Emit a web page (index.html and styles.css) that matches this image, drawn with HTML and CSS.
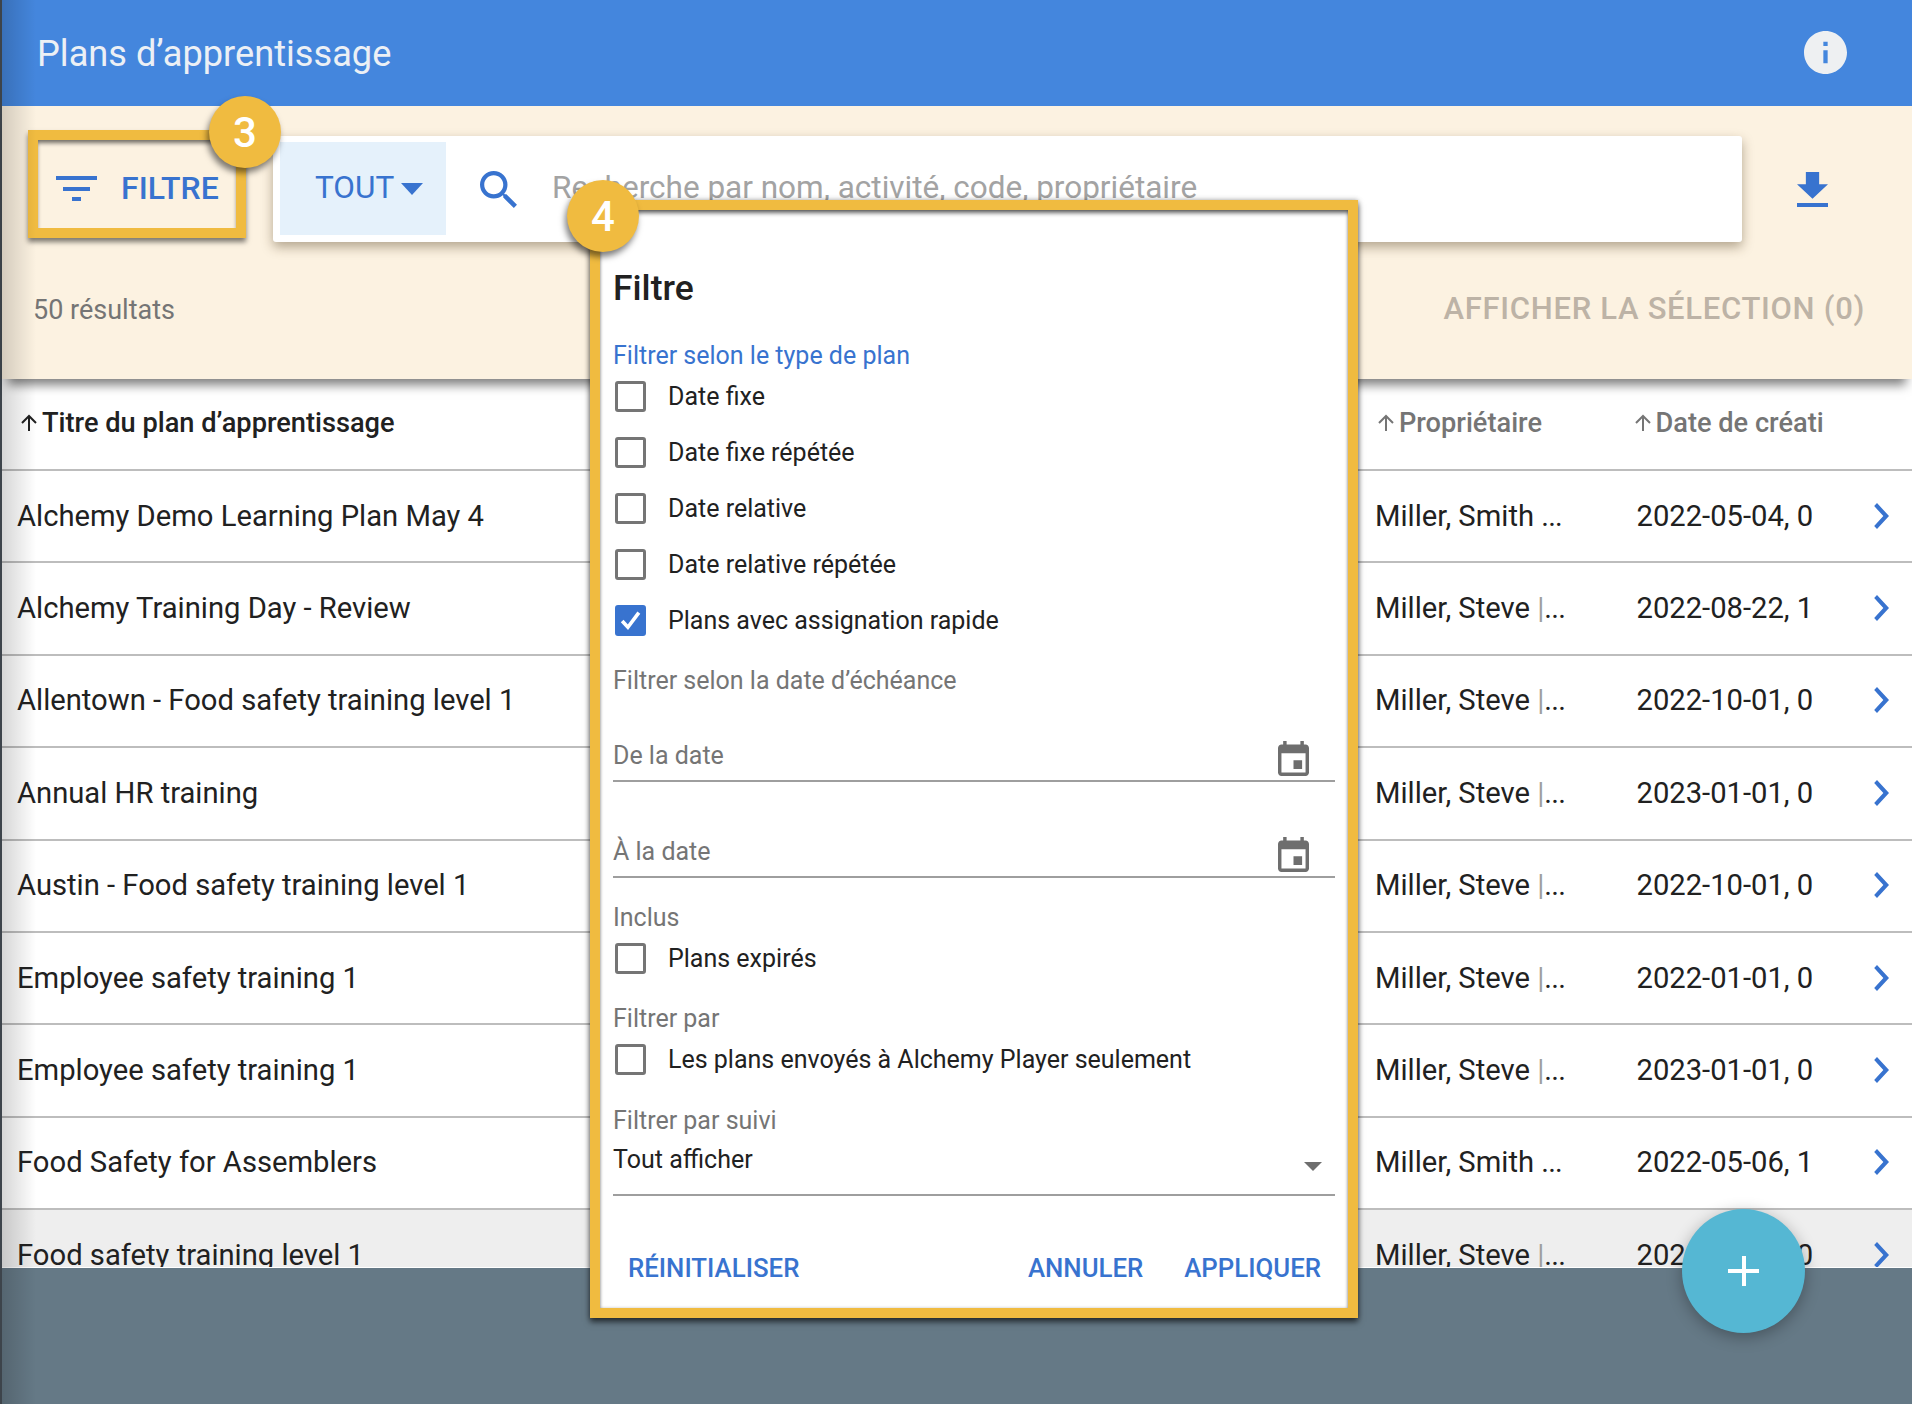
FILE: index.html
```html
<!doctype html>
<html lang="fr">
<head>
  <meta charset="UTF-8">
  <title>Plans d'apprentissage</title>
  <link rel="stylesheet" href="styles.css">
</head>
<body>
  <div class="app">
    <header class="topbar">
      <h1 class="topbar-title">Plans d’apprentissage</h1>
      <svg class="info-icon" viewBox="2 2 20 20"><path d="M12 2C6.48 2 2 6.48 2 12s4.48 10 10 10 10-4.48 10-10S17.52 2 12 2zm1 15h-2v-6h2v6zm0-8h-2V7h2v2z"/></svg>
    </header>

    <section class="toolbar">
      <div class="toolbar-top">
        <div class="filter-btn">
          <span class="filter-icon"><i></i><i></i><i></i></span>
          <span>FILTRE</span>
        </div>
        <div class="search">
          <div class="scope">TOUT<span class="scope-caret"></span></div>
          <svg class="search-icon" viewBox="3 3 17.5 17.5"><path d="M15.5 14h-.79l-.28-.27A6.471 6.471 0 0 0 16 9.5 6.5 6.5 0 1 0 9.5 16c1.61 0 3.09-.59 4.23-1.57l.27.28v.79l5 4.99L20.49 19l-4.99-5zm-6 0C7.01 14 5 11.99 5 9.5S7.01 5 9.5 5 14 7.01 14 9.5 11.99 14 9.5 14z"/></svg>
          <span class="placeholder">Recherche par nom, activité, code, propriétaire</span>
        </div>
        <svg class="download-icon" viewBox="5 3 14 17" preserveAspectRatio="none"><path d="M19 9h-4V3H9v6H5l7 7 7-7zM5 18v2h14v-2H5z"/></svg>
      </div>
      <div class="toolbar-bottom">
        <span class="count">50 résultats</span>
        <span class="show-selection">AFFICHER LA SÉLECTION (0)</span>
      </div>
    </section>

    <div class="list">
      <div class="row row-head">
        <div class="cell-title"><svg class="sort-icon" viewBox="0 0 18 18"><path d="M9 17V2M2 9l7-7 7 7"/></svg>Titre du plan d’apprentissage</div>
        <div class="cell-muted"><svg class="sort-icon" viewBox="0 0 18 18"><path d="M9 17V2M2 9l7-7 7 7"/></svg>Propriétaire</div>
        <div class="cell-muted cell-date"><svg class="sort-icon" viewBox="0 0 18 18"><path d="M9 17V2M2 9l7-7 7 7"/></svg>Date de création</div>
      </div>

      <div class="row">
        <div>Alchemy Demo Learning Plan May 4</div>
        <div>Miller, Smith <span class="dots">...</span></div>
        <div class="cell-date">2022-05-04, 0</div>
        <svg class="chevron" viewBox="8 5.5 8.5 13" preserveAspectRatio="none"><path d="M10 6L8.59 7.41 13.17 12l-4.58 4.59L10 18l6-6z"/></svg>
      </div>
      <div class="row">
        <div>Alchemy Training Day - Review</div>
        <div>Miller, Steve <span class="pipe">|</span><span class="dots">...</span></div>
        <div class="cell-date">2022-08-22, 1</div>
        <svg class="chevron" viewBox="8 5.5 8.5 13" preserveAspectRatio="none"><path d="M10 6L8.59 7.41 13.17 12l-4.58 4.59L10 18l6-6z"/></svg>
      </div>
      <div class="row">
        <div>Allentown - Food safety training level 1</div>
        <div>Miller, Steve <span class="pipe">|</span><span class="dots">...</span></div>
        <div class="cell-date">2022-10-01, 0</div>
        <svg class="chevron" viewBox="8 5.5 8.5 13" preserveAspectRatio="none"><path d="M10 6L8.59 7.41 13.17 12l-4.58 4.59L10 18l6-6z"/></svg>
      </div>
      <div class="row">
        <div>Annual HR training</div>
        <div>Miller, Steve <span class="pipe">|</span><span class="dots">...</span></div>
        <div class="cell-date">2023-01-01, 0</div>
        <svg class="chevron" viewBox="8 5.5 8.5 13" preserveAspectRatio="none"><path d="M10 6L8.59 7.41 13.17 12l-4.58 4.59L10 18l6-6z"/></svg>
      </div>
      <div class="row">
        <div>Austin - Food safety training level 1</div>
        <div>Miller, Steve <span class="pipe">|</span><span class="dots">...</span></div>
        <div class="cell-date">2022-10-01, 0</div>
        <svg class="chevron" viewBox="8 5.5 8.5 13" preserveAspectRatio="none"><path d="M10 6L8.59 7.41 13.17 12l-4.58 4.59L10 18l6-6z"/></svg>
      </div>
      <div class="row">
        <div>Employee safety training 1</div>
        <div>Miller, Steve <span class="pipe">|</span><span class="dots">...</span></div>
        <div class="cell-date">2022-01-01, 0</div>
        <svg class="chevron" viewBox="8 5.5 8.5 13" preserveAspectRatio="none"><path d="M10 6L8.59 7.41 13.17 12l-4.58 4.59L10 18l6-6z"/></svg>
      </div>
      <div class="row">
        <div>Employee safety training 1</div>
        <div>Miller, Steve <span class="pipe">|</span><span class="dots">...</span></div>
        <div class="cell-date">2023-01-01, 0</div>
        <svg class="chevron" viewBox="8 5.5 8.5 13" preserveAspectRatio="none"><path d="M10 6L8.59 7.41 13.17 12l-4.58 4.59L10 18l6-6z"/></svg>
      </div>
      <div class="row">
        <div>Food Safety for Assemblers</div>
        <div>Miller, Smith <span class="dots">...</span></div>
        <div class="cell-date">2022-05-06, 1</div>
        <svg class="chevron" viewBox="8 5.5 8.5 13" preserveAspectRatio="none"><path d="M10 6L8.59 7.41 13.17 12l-4.58 4.59L10 18l6-6z"/></svg>
      </div>
      <div class="row row-hover">
        <div>Food safety training level 1</div>
        <div>Miller, Steve <span class="pipe">|</span><span class="dots">...</span></div>
        <div class="cell-date">2022-10-01, 0</div>
        <svg class="chevron" viewBox="8 5.5 8.5 13" preserveAspectRatio="none"><path d="M10 6L8.59 7.41 13.17 12l-4.58 4.59L10 18l6-6z"/></svg>
      </div>
    </div>

    <div class="backdrop"></div>

    <div class="dialog">
      <h2 class="dialog-title">Filtre</h2>

      <div class="section-link">Filtrer selon le type de plan</div>
      <div class="check-row"><span class="checkbox"></span>Date fixe</div>
      <div class="check-row"><span class="checkbox"></span>Date fixe répétée</div>
      <div class="check-row"><span class="checkbox"></span>Date relative</div>
      <div class="check-row"><span class="checkbox"></span>Date relative répétée</div>
      <div class="check-row">
        <span class="checkbox checked"><svg viewBox="0 0 24 24"><path d="M4 12.5l5.5 6L20 4.5"/></svg></span>Plans avec assignation rapide
      </div>

      <div class="label label-due">Filtrer selon la date d’échéance</div>
      <div class="field field-from">
        <span>De la date</span>
        <svg class="calendar-icon" viewBox="3 1 18 20" preserveAspectRatio="none"><path d="M17 12h-5v5h5v-5zM16 1v2H8V1H6v2H5c-1.11 0-1.99.9-1.99 2L3 19c0 1.1.89 2 2 2h14c1.1 0 2-.9 2-2V5c0-1.1-.9-2-2-2h-1V1h-2zm3 18H5V8h14v11z"/></svg>
      </div>
      <div class="field field-to">
        <span>À la date</span>
        <svg class="calendar-icon" viewBox="3 1 18 20" preserveAspectRatio="none"><path d="M17 12h-5v5h5v-5zM16 1v2H8V1H6v2H5c-1.11 0-1.99.9-1.99 2L3 19c0 1.1.89 2 2 2h14c1.1 0 2-.9 2-2V5c0-1.1-.9-2-2-2h-1V1h-2zm3 18H5V8h14v11z"/></svg>
      </div>

      <div class="label label-included">Inclus</div>
      <div class="check-row check-row-short"><span class="checkbox"></span>Plans expirés</div>

      <div class="label label-by">Filtrer par</div>
      <div class="check-row check-row-short check-row-player"><span class="checkbox"></span>Les plans envoyés à Alchemy Player seulement</div>

      <div class="label label-track">Filtrer par suivi</div>
      <div class="select">
        <span>Tout afficher</span>
        <span class="select-caret"></span>
      </div>

      <div class="actions">
        <span class="action">RÉINITIALISER</span>
        <span class="action action-cancel">ANNULER</span>
        <span class="action">APPLIQUER</span>
      </div>
    </div>

    <div class="badge badge-3">3</div>
    <div class="badge badge-4">4</div>

    <div class="fab"><i></i><i></i></div>
  </div>
</body>
</html>
```

FILE: styles.css
```css
* {
    box-sizing: border-box;
}

html,
body {
    height: 100%;
}

body {
    margin: 0;
    background: #3d444b;
    font-family: Roboto, "Liberation Sans", sans-serif;
    color: #212121;
    overflow: hidden;
}

.app {
    position: relative;
    margin-left: 2px;
    height: 1404px;
    display: flex;
    flex-direction: column;
    background: #fff;
}

/* soft shadow down the left edge */
.app::after {
    content: "";
    position: absolute;
    top: 0;
    bottom: 0;
    left: 0;
    width: 34px;
    background: linear-gradient(to right, rgba(0, 0, 0, 0.16), rgba(0, 0, 0, 0));
    pointer-events: none;
    z-index: 3;
}

.topbar {
    height: 106px;
    flex: none;
    background: #4486dd;
    display: flex;
    align-items: center;
    justify-content: space-between;
    padding: 0 65px 0 35px;
}

.topbar-title {
    margin: 0;
    font-size: 36.2px;
    font-weight: 400;
    color: #ecf0f5;
}

.info-icon {
    width: 43px;
    height: 43px;
    margin-bottom: 2px;
    fill: #eef0f2;
}

.toolbar {
    position: relative;
    z-index: 2;
    height: 273px;
    flex: none;
    background: #fcf2e1;
    box-shadow: 0 12px 10px -6px rgba(0, 0, 0, 0.5);
    padding: 24px 0 0 26px;
}

.toolbar-top {
    display: flex;
    align-items: flex-start;
}

.filter-btn {
    width: 218px;
    height: 108px;
    border: 10px solid #f0bb40;
    box-shadow: 0 4px 5px rgba(0, 0, 0, 0.5), inset 0 4px 4px -1px rgba(0, 0, 0, 0.55);
    display: flex;
    align-items: center;
    gap: 24px;
    padding: 7px 0 0 18px;
    color: #3873cf;
    font-size: 32px;
    font-weight: 500;
}

.filter-icon {
    width: 41px;
    margin-top: 2px;
    display: flex;
    flex-direction: column;
    align-items: center;
    gap: 6.5px;
}

.filter-icon i {
    display: block;
    height: 4px;
    background: #3873cf;
    width: 41px;
}

.filter-icon i:nth-child(2) {
    width: 27px;
}

.filter-icon i:nth-child(3) {
    width: 9px;
}

.search {
    margin: 6px 0 0 27px;
    width: 1469px;
    height: 106px;
    background: #fff;
    border-radius: 3px;
    box-shadow: 0 5px 12px rgba(70, 50, 20, 0.4);
    display: flex;
    align-items: center;
    padding-left: 7px;
}

.scope {
    width: 166px;
    height: 93px;
    margin-bottom: 1px;
    background: #e5f1fb;
    display: flex;
    align-items: center;
    padding: 0 0 2px 35px;
    color: #3873cf;
    font-size: 31.5px;
}

.scope-caret {
    margin: 2px 0 0 7px;
    border-left: 11px solid transparent;
    border-right: 11px solid transparent;
    border-top: 12px solid #3873cf;
}

.search-icon {
    width: 37px;
    height: 37px;
    margin-left: 34px;
    fill: #3873cf;
}

.placeholder {
    margin: 0 0 3px 35px;
    color: #a3a3a3;
    font-size: 31.5px;
    white-space: nowrap;
}

.download-icon {
    width: 31px;
    height: 35px;
    margin: 42px 0 0 55px;
    fill: #3873cf;
}

.toolbar-bottom {
    display: flex;
    justify-content: space-between;
    align-items: center;
    margin-top: 48px;
    padding: 0 47px 0 5px;
}

.count {
    font-size: 27px;
    padding-top: 3px;
    color: #757575;
}

.show-selection {
    font-size: 31px;
    font-weight: 500;
    color: #bdb3a6;
    letter-spacing: 0.7px;
}

.list {
    height: 889px;
    flex: none;
    overflow: hidden;
    background: #fff;
    border-bottom: 1px solid #fff;
}

.row {
    height: 92.4px;
    display: grid;
    grid-template-columns: 1358px 261.5px 188px 1fr;
    align-items: center;
    padding: 0 0 1px 15px;
    border-bottom: 2px solid #bdbdbd;
    font-size: 29.2px;
    white-space: nowrap;
}

.row-head {
    height: 92px;
    font-size: 27.2px;
    font-weight: 500;
    padding-bottom: 2px;
}

.row-hover {
    background: #eee;
}

.cell-title {
    padding-left: 3px;
    display: flex;
    align-items: center;
}

.cell-muted {
    padding-left: 2px;
    display: flex;
    align-items: center;
    color: #757575;
}

.cell-date {
    overflow: hidden;
}

.row-head .cell-date {
    margin: 0 2px 0 -5px;
}

.sort-icon {
    width: 18px;
    height: 18px;
    margin-right: 4px;
    flex: none;
    fill: none;
    stroke: currentColor;
    stroke-width: 2;
}

.pipe {
    color: #9e9e9e;
}

.dots {
    letter-spacing: -0.8px;
}

.chevron {
    width: 17px;
    height: 28px;
    justify-self: end;
    margin-right: 22px;
    fill: #3873cf;
}

.backdrop {
    flex: 1;
    background: #657986;
}

.dialog {
    position: absolute;
    left: 588px;
    top: 200px;
    width: 768px;
    height: 1118px;
    z-index: 5;
    background: #fff;
    border: 10.5px solid #f0bb40;
    border-top-width: 10px;
    border-bottom-width: 10px;
    box-shadow: 0 4px 6px rgba(0, 0, 0, 0.6), 0 0 5px rgba(0, 0, 0, 0.3), inset 0 4px 4px -1px rgba(0, 0, 0, 0.6), inset 0 0 3px rgba(0, 0, 0, 0.25);
    padding: 58px 13px 0 13px;
    font-size: 25px;
}

.dialog-title {
    margin: 0;
    font-size: 35.5px;
    line-height: 40px;
    font-weight: 500;
}

.section-link {
    margin-top: 35px;
    line-height: 25px;
    color: #3873cf;
}

.check-row {
    height: 56px;
    display: flex;
    align-items: center;
    gap: 22px;
}

.check-row-short {
    height: 50px;
}

.checkbox {
    width: 31px;
    height: 31px;
    margin-left: 2px;
    flex: none;
    border: 3.5px solid #757575;
    border-radius: 3px;
}

.checkbox.checked {
    background: #3873cf;
    border-color: #3873cf;
    display: flex;
}

.checkbox svg {
    width: 100%;
    height: 100%;
    fill: none;
    stroke: #fff;
    stroke-width: 3.5;
}

.label {
    line-height: 30px;
    color: #757575;
}

.label-due {
    margin-top: 18px;
}

.label-included {
    margin-top: 25px;
}

.label-by {
    margin-top: 21px;
}

.label-track {
    margin-top: 22px;
}

.field {
    height: 41px;
    display: flex;
    align-items: flex-start;
    justify-content: space-between;
    border-bottom: 2px solid #9e9e9e;
    padding-right: 26px;
    line-height: 30px;
    color: #757575;
}

.field-from {
    margin-top: 45px;
}

.field-to {
    margin-top: 55px;
}

.calendar-icon {
    width: 31px;
    height: 35px;
    fill: #6e6e6e;
}

.select {
    margin-top: 9px;
    height: 51px;
    display: flex;
    align-items: flex-start;
    justify-content: space-between;
    border-bottom: 2px solid #9e9e9e;
    line-height: 30px;
}

.select-caret {
    margin: 17px 13px 0 0;
    border-left: 9px solid transparent;
    border-right: 9px solid transparent;
    border-top: 9px solid #6e6e6e;
}

.actions {
    margin-top: 57px;
    display: flex;
    padding: 0 14px 0 15px;
    font-size: 25.8px;
}

.action {
    line-height: 30px;
    font-weight: 500;
    color: #3873cf;
    margin-left: 41px;
}

.action:first-child {
    margin-left: 0;
}

.action-cancel {
    margin-left: auto;
}

.badge {
    position: absolute;
    z-index: 6;
    width: 72px;
    height: 72px;
    border-radius: 50%;
    background: #f0bb40;
    box-shadow: -2px 5px 6px rgba(0, 0, 0, 0.5);
    color: #fff;
    font-size: 42px;
    font-weight: 500;
    display: flex;
    align-items: center;
    justify-content: center;
}

.badge-3 {
    left: 207px;
    top: 96px;
}

.badge-4 {
    left: 565px;
    top: 180px;
}

.fab {
    position: absolute;
    z-index: 4;
    left: 1680px;
    top: 1209px;
    width: 123px;
    height: 124px;
    border-radius: 50%;
    background: #55b7d3;
    box-shadow: 0 4px 16px rgba(0, 0, 0, 0.3);
}

.fab i {
    position: absolute;
    background: #fff;
    left: 46px;
    top: 60px;
    width: 31px;
    height: 4px;
}

.fab i:last-child {
    left: 59.5px;
    top: 47px;
    width: 4px;
    height: 30px;
}
```
